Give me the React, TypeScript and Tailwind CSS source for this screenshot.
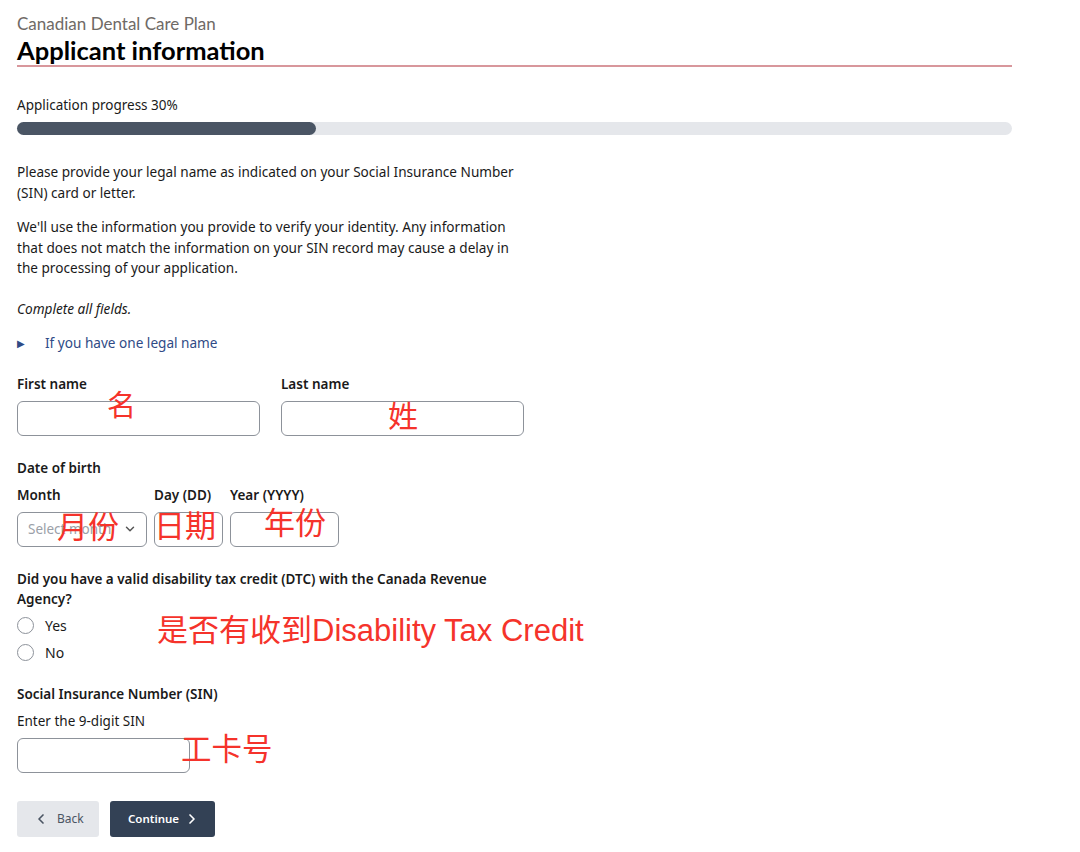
import { ChevronDown, ChevronLeft, ChevronRight } from "lucide-react"

const body = { fontFamily: '"Noto Sans", "Open Sans", sans-serif' }
const head = { fontFamily: 'Lato, "Noto Sans", sans-serif' }
const note = { fontFamily: '"Liberation Sans", "Noto Sans CJK SC", sans-serif' }

function Note({ text, className }: { text: string; className: string }) {
  return (
    <span className={`absolute whitespace-nowrap text-[#f5332b] leading-none ${className}`} style={note}>
      {text}
    </span>
  )
}

function Radio({ label }: { label: string }) {
  return (
    <label className="flex items-center gap-[11px] h-[27px] text-[14px] text-[#1a1a1a]">
      <span className="h-[17px] w-[17px] rounded-full border border-[#8d929a] bg-white" />
      {label}
    </label>
  )
}

export default function App() {
  const progress = 30

  return (
    <div className="relative min-h-[852px] w-[1080px] bg-white text-[#1a1a1a]" style={body}>
      <div className="w-[995px] ml-[17px] pt-[12px]">
        {/* Header */}
        <div className="border-b-2 border-solid border-[#d8979c]">
          <p className="text-[17px] leading-[23px] text-[#6f6a66]" style={head}>
            Canadian Dental Care Plan
          </p>
          <h1 className="text-[25.5px] leading-[30px] font-bold text-black" style={head}>
            Applicant information
          </h1>
        </div>

        {/* Progress */}
        <p className="mt-[28px] text-[13.5px] leading-[20px]">Application progress {progress}%</p>
        <div className="mt-[7px] h-[13px] w-full rounded-full bg-[#e5e7eb]">
          <div className="h-[13px] rounded-full bg-[#4a5564]" style={{ width: `${progress}%` }} />
        </div>

        <div className="mt-[27px] w-[515px] text-[13.6px] leading-[20.5px]">
          <p>
            Please provide your legal name as indicated on your Social Insurance Number (SIN) card or letter.
          </p>
          <p className="mt-[14px]">
            We'll use the information you provide to verify your identity. Any information that does not match the
            information on your SIN record may cause a delay in the processing of your application.
          </p>
          <p className="mt-[20px] italic">Complete all fields.</p>

          <div className="mt-[14px] flex items-center text-[#2f4b86]">
            <span className="text-[10px] w-[28px] text-[#2f4b86]">▶</span>
            <span>If you have one legal name</span>
          </div>
        </div>

        {/* Names */}
        <div className="mt-[20px] flex gap-[21px]">
          <div className="w-[243px]">
            <p className="text-[13.5px] leading-[20px] font-semibold">First name</p>
            <div className="mt-[7px] h-[35px] rounded-[6px] border border-[#8d929a]" />
          </div>
          <div className="w-[243px]">
            <p className="text-[13.5px] leading-[20px] font-semibold">Last name</p>
            <div className="mt-[7px] h-[35px] rounded-[6px] border border-[#8d929a]" />
          </div>
        </div>

        {/* Date of birth */}
        <p className="mt-[22px] text-[13.5px] leading-[20px] font-semibold">Date of birth</p>
        <div className="mt-[7px] flex gap-[7px]">
          <div className="w-[130px]">
            <p className="text-[13.5px] leading-[20px] font-semibold">Month</p>
            <div className="mt-[7px] flex h-[35px] items-center justify-between rounded-[6px] border border-[#8d929a] pl-[10px] pr-[9px]">
              <span className="text-[13.5px] text-[#9aa0a8]">Select month</span>
              <ChevronDown className="h-[14px] w-[14px] text-[#555]" strokeWidth={2.5} />
            </div>
          </div>
          <div className="w-[69px]">
            <p className="text-[13.5px] leading-[20px] font-semibold">Day (DD)</p>
            <div className="mt-[7px] h-[35px] rounded-[6px] border border-[#8d929a]" />
          </div>
          <div className="w-[109px]">
            <p className="text-[13.5px] leading-[20px] font-semibold">Year (YYYY)</p>
            <div className="mt-[7px] h-[35px] rounded-[6px] border border-[#8d929a]" />
          </div>
        </div>

        {/* DTC */}
        <p className="mt-[22px] w-[500px] text-[13.5px] leading-[20.5px] font-semibold">
          Did you have a valid disability tax credit (DTC) with the Canada Revenue Agency?
        </p>
        <div className="mt-[2px] flex flex-col">
          <Radio label="Yes" />
          <Radio label="No" />
        </div>

        {/* SIN */}
        <p className="mt-[18px] text-[13.5px] leading-[20px] font-semibold">Social Insurance Number (SIN)</p>
        <p className="mt-[7px] text-[13.5px] leading-[20px]">Enter the 9-digit SIN</p>
        <div className="mt-[7px] h-[35px] w-[173px] rounded-[6px] border border-[#8d929a]" />

        {/* Actions */}
        <div className="mt-[28px] flex gap-[11px]">
          <button className="flex h-[36px] w-[82px] items-center gap-[8px] rounded-[3px] bg-[#e5e7eb] pl-[16px] text-[12px] text-[#4b5563]">
            <ChevronLeft className="h-[16px] w-[16px]" strokeWidth={2.5} />
            Back
          </button>
          <button className="flex h-[36px] w-[105px] items-center gap-[5px] rounded-[3px] bg-[#334155] pl-[18px] text-[11.5px] font-semibold text-white">
            Continue
            <ChevronRight className="h-[16px] w-[16px]" strokeWidth={2.5} />
          </button>
        </div>
      </div>

      {/* Annotations */}
      <Note text="名" className="left-[107px] top-[392px] text-[29px]" />
      <Note text="姓" className="left-[388px] top-[402px] text-[30px]" />
      <Note text="月份" className="left-[57px] top-[512px] text-[31px]" />
      <Note text="日期" className="left-[154px] top-[511px] text-[31px]" />
      <Note text="年份" className="left-[264px] top-[508px] text-[31px]" />
      <Note text="是否有收到Disability Tax Credit" className="left-[157px] top-[615px] text-[31px]" />
      <Note text="工卡号" className="left-[181px] top-[734px] text-[30.5px]" />
    </div>
  )
}
